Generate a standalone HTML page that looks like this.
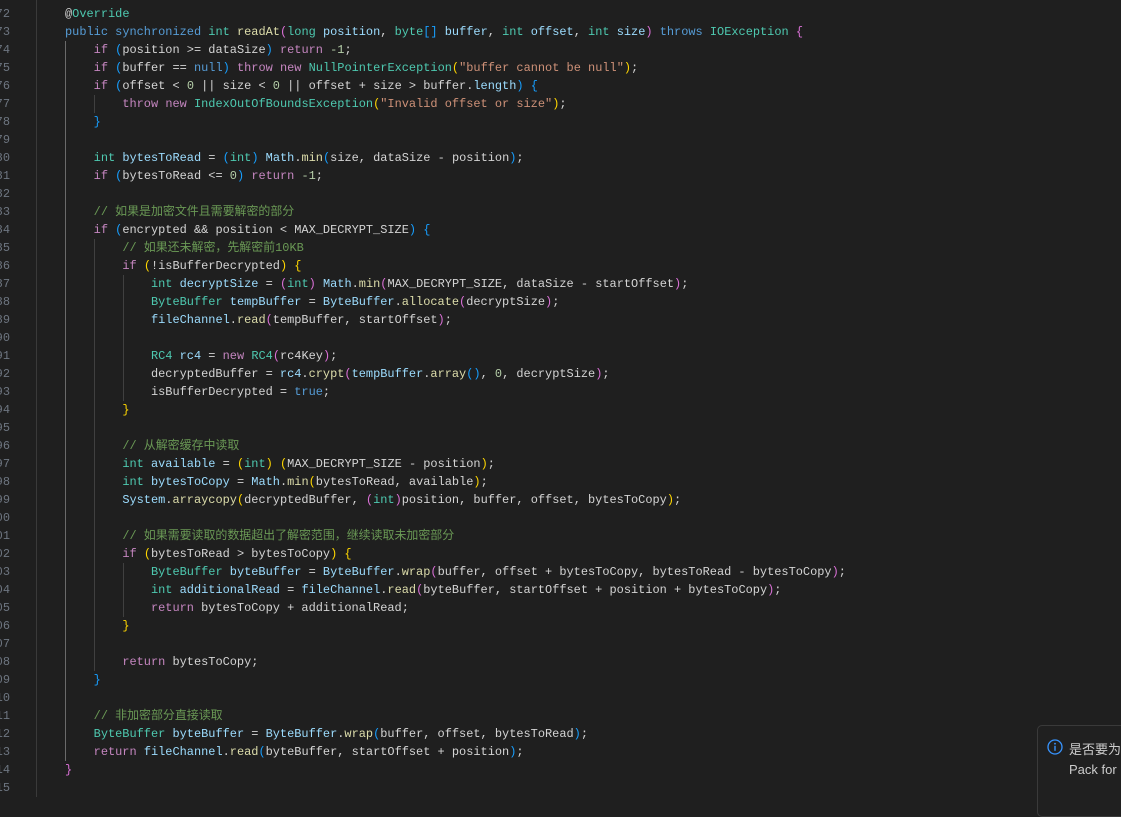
<!DOCTYPE html>
<html><head><meta charset="utf-8"><style>
html,body{margin:0;padding:0;background:#1f1f1f;width:1121px;height:797px;overflow:hidden;}
#ed{position:absolute;left:0;top:0;width:1121px;height:797px;font-family:"Liberation Mono","Noto Sans CJK SC",monospace;font-size:11.95px;color:#d4d4d4;}
.ln{position:absolute;left:-30px;width:40px;text-align:right;color:#6e7681;white-space:pre;height:18px;line-height:18px;}
.l{position:absolute;left:65px;white-space:pre;height:18px;line-height:19px;}
.g{position:absolute;width:1px;background:#404040;}
.k{color:#c586c0}.s{color:#569cd6}.t{color:#4ec9b0}.f{color:#dcdcaa}.v{color:#9cdcfe}.n{color:#b5cea8}.q{color:#ce9178}.c{color:#6a9955}
.b1{color:#ffd700}.b2{color:#da70d6}.b3{color:#179fff}
#nt{position:absolute;left:1037px;top:725px;width:100px;height:90px;background:#202020;border:1px solid #3a3a3a;border-radius:5px;font-family:"Liberation Sans","Noto Sans CJK SC",sans-serif;font-size:13px;color:#cccccc;}
</style></head><body><div id="ed">
<div class="g" style="left:36px;top:0;height:797px;background:#3a3a3a"></div>
<div class="g" style="left:65px;top:41px;height:720px;background:#6a6a6a"></div>
<div class="g" style="left:94px;top:95px;height:18px"></div>
<div class="g" style="left:94px;top:239px;height:432px"></div>
<div class="g" style="left:123px;top:275px;height:126px"></div>
<div class="g" style="left:123px;top:563px;height:54px"></div>

<div class="ln" style="top:-13px">71</div>
<div class="ln" style="top:5px">72</div>
<div class="ln" style="top:23px">73</div>
<div class="ln" style="top:41px">74</div>
<div class="ln" style="top:59px">75</div>
<div class="ln" style="top:77px">76</div>
<div class="ln" style="top:95px">77</div>
<div class="ln" style="top:113px">78</div>
<div class="ln" style="top:131px">79</div>
<div class="ln" style="top:149px">80</div>
<div class="ln" style="top:167px">81</div>
<div class="ln" style="top:185px">82</div>
<div class="ln" style="top:203px">83</div>
<div class="ln" style="top:221px">84</div>
<div class="ln" style="top:239px">85</div>
<div class="ln" style="top:257px">86</div>
<div class="ln" style="top:275px">87</div>
<div class="ln" style="top:293px">88</div>
<div class="ln" style="top:311px">89</div>
<div class="ln" style="top:329px">90</div>
<div class="ln" style="top:347px">91</div>
<div class="ln" style="top:365px">92</div>
<div class="ln" style="top:383px">93</div>
<div class="ln" style="top:401px">94</div>
<div class="ln" style="top:419px">95</div>
<div class="ln" style="top:437px">96</div>
<div class="ln" style="top:455px">97</div>
<div class="ln" style="top:473px">98</div>
<div class="ln" style="top:491px">99</div>
<div class="ln" style="top:509px">100</div>
<div class="ln" style="top:527px">101</div>
<div class="ln" style="top:545px">102</div>
<div class="ln" style="top:563px">103</div>
<div class="ln" style="top:581px">104</div>
<div class="ln" style="top:599px">105</div>
<div class="ln" style="top:617px">106</div>
<div class="ln" style="top:635px">107</div>
<div class="ln" style="top:653px">108</div>
<div class="ln" style="top:671px">109</div>
<div class="ln" style="top:689px">110</div>
<div class="ln" style="top:707px">111</div>
<div class="ln" style="top:725px">112</div>
<div class="ln" style="top:743px">113</div>
<div class="ln" style="top:761px">114</div>
<div class="ln" style="top:779px">115</div>

<div class="l" style="top:5px">@<span class="t">Override</span></div>
<div class="l" style="top:23px"><span class="s">public</span> <span class="s">synchronized</span> <span class="t">int</span> <span class="f">readAt</span><span class="b2">(</span><span class="t">long</span> <span class="v">position</span>, <span class="t">byte</span><span class="b3">[]</span> <span class="v">buffer</span>, <span class="t">int</span> <span class="v">offset</span>, <span class="t">int</span> <span class="v">size</span><span class="b2">)</span> <span class="s">throws</span> <span class="t">IOException</span> <span class="b2">{</span></div>
<div class="l" style="top:41px">    <span class="k">if</span> <span class="b3">(</span>position &gt;= dataSize<span class="b3">)</span> <span class="k">return</span> <span class="n">-1</span>;</div>
<div class="l" style="top:59px">    <span class="k">if</span> <span class="b3">(</span>buffer == <span class="s">null</span><span class="b3">)</span> <span class="k">throw</span> <span class="k">new</span> <span class="t">NullPointerException</span><span class="b1">(</span><span class="q">"buffer cannot be null"</span><span class="b1">)</span>;</div>
<div class="l" style="top:77px">    <span class="k">if</span> <span class="b3">(</span>offset &lt; <span class="n">0</span> || size &lt; <span class="n">0</span> || offset + size &gt; buffer.<span class="v">length</span><span class="b3">)</span> <span class="b3">{</span></div>
<div class="l" style="top:95px">        <span class="k">throw</span> <span class="k">new</span> <span class="t">IndexOutOfBoundsException</span><span class="b1">(</span><span class="q">"Invalid offset or size"</span><span class="b1">)</span>;</div>
<div class="l" style="top:113px">    <span class="b3">}</span></div>
<div class="l" style="top:149px">    <span class="t">int</span> <span class="v">bytesToRead</span> = <span class="b3">(</span><span class="t">int</span><span class="b3">)</span> <span class="v">Math</span>.<span class="f">min</span><span class="b3">(</span>size, dataSize - position<span class="b3">)</span>;</div>
<div class="l" style="top:167px">    <span class="k">if</span> <span class="b3">(</span>bytesToRead &lt;= <span class="n">0</span><span class="b3">)</span> <span class="k">return</span> <span class="n">-1</span>;</div>
<div class="l" style="top:203px">    <span class="c">// 如果是加密文件且需要解密的部分</span></div>
<div class="l" style="top:221px">    <span class="k">if</span> <span class="b3">(</span>encrypted &amp;&amp; position &lt; MAX_DECRYPT_SIZE<span class="b3">)</span> <span class="b3">{</span></div>
<div class="l" style="top:239px">        <span class="c">// 如果还未解密，先解密前10KB</span></div>
<div class="l" style="top:257px">        <span class="k">if</span> <span class="b1">(</span>!isBufferDecrypted<span class="b1">)</span> <span class="b1">{</span></div>
<div class="l" style="top:275px">            <span class="t">int</span> <span class="v">decryptSize</span> = <span class="b2">(</span><span class="t">int</span><span class="b2">)</span> <span class="v">Math</span>.<span class="f">min</span><span class="b2">(</span>MAX_DECRYPT_SIZE, dataSize - startOffset<span class="b2">)</span>;</div>
<div class="l" style="top:293px">            <span class="t">ByteBuffer</span> <span class="v">tempBuffer</span> = <span class="v">ByteBuffer</span>.<span class="f">allocate</span><span class="b2">(</span>decryptSize<span class="b2">)</span>;</div>
<div class="l" style="top:311px">            <span class="v">fileChannel</span>.<span class="f">read</span><span class="b2">(</span>tempBuffer, startOffset<span class="b2">)</span>;</div>
<div class="l" style="top:347px">            <span class="t">RC4</span> <span class="v">rc4</span> = <span class="k">new</span> <span class="t">RC4</span><span class="b2">(</span>rc4Key<span class="b2">)</span>;</div>
<div class="l" style="top:365px">            decryptedBuffer = <span class="v">rc4</span>.<span class="f">crypt</span><span class="b2">(</span><span class="v">tempBuffer</span>.<span class="f">array</span><span class="b3">()</span>, <span class="n">0</span>, decryptSize<span class="b2">)</span>;</div>
<div class="l" style="top:383px">            isBufferDecrypted = <span class="s">true</span>;</div>
<div class="l" style="top:401px">        <span class="b1">}</span></div>
<div class="l" style="top:437px">        <span class="c">// 从解密缓存中读取</span></div>
<div class="l" style="top:455px">        <span class="t">int</span> <span class="v">available</span> = <span class="b1">(</span><span class="t">int</span><span class="b1">)</span> <span class="b1">(</span>MAX_DECRYPT_SIZE - position<span class="b1">)</span>;</div>
<div class="l" style="top:473px">        <span class="t">int</span> <span class="v">bytesToCopy</span> = <span class="v">Math</span>.<span class="f">min</span><span class="b1">(</span>bytesToRead, available<span class="b1">)</span>;</div>
<div class="l" style="top:491px">        <span class="v">System</span>.<span class="f">arraycopy</span><span class="b1">(</span>decryptedBuffer, <span class="b2">(</span><span class="t">int</span><span class="b2">)</span>position, buffer, offset, bytesToCopy<span class="b1">)</span>;</div>
<div class="l" style="top:527px">        <span class="c">// 如果需要读取的数据超出了解密范围，继续读取未加密部分</span></div>
<div class="l" style="top:545px">        <span class="k">if</span> <span class="b1">(</span>bytesToRead &gt; bytesToCopy<span class="b1">)</span> <span class="b1">{</span></div>
<div class="l" style="top:563px">            <span class="t">ByteBuffer</span> <span class="v">byteBuffer</span> = <span class="v">ByteBuffer</span>.<span class="f">wrap</span><span class="b2">(</span>buffer, offset + bytesToCopy, bytesToRead - bytesToCopy<span class="b2">)</span>;</div>
<div class="l" style="top:581px">            <span class="t">int</span> <span class="v">additionalRead</span> = <span class="v">fileChannel</span>.<span class="f">read</span><span class="b2">(</span>byteBuffer, startOffset + position + bytesToCopy<span class="b2">)</span>;</div>
<div class="l" style="top:599px">            <span class="k">return</span> bytesToCopy + additionalRead;</div>
<div class="l" style="top:617px">        <span class="b1">}</span></div>
<div class="l" style="top:653px">        <span class="k">return</span> bytesToCopy;</div>
<div class="l" style="top:671px">    <span class="b3">}</span></div>
<div class="l" style="top:707px">    <span class="c">// 非加密部分直接读取</span></div>
<div class="l" style="top:725px">    <span class="t">ByteBuffer</span> <span class="v">byteBuffer</span> = <span class="v">ByteBuffer</span>.<span class="f">wrap</span><span class="b3">(</span>buffer, offset, bytesToRead<span class="b3">)</span>;</div>
<div class="l" style="top:743px">    <span class="k">return</span> <span class="v">fileChannel</span>.<span class="f">read</span><span class="b3">(</span>byteBuffer, startOffset + position<span class="b3">)</span>;</div>
<div class="l" style="top:761px"><span class="b2">}</span></div>

<div id="nt"><svg style="position:absolute;left:9px;top:13px" width="16" height="16" viewBox="0 0 16 16"><circle cx="8" cy="8" r="7" fill="none" stroke="#3794ff" stroke-width="1.3"/><rect x="7.3" y="6.8" width="1.4" height="5" fill="#3794ff"/><circle cx="8" cy="4.7" r="0.9" fill="#3794ff"/></svg><div style="position:absolute;left:31px;top:13px;white-space:nowrap">是否要为</div><div style="position:absolute;left:31px;top:36px;white-space:nowrap">Pack for</div></div>
</div>
</body></html>
